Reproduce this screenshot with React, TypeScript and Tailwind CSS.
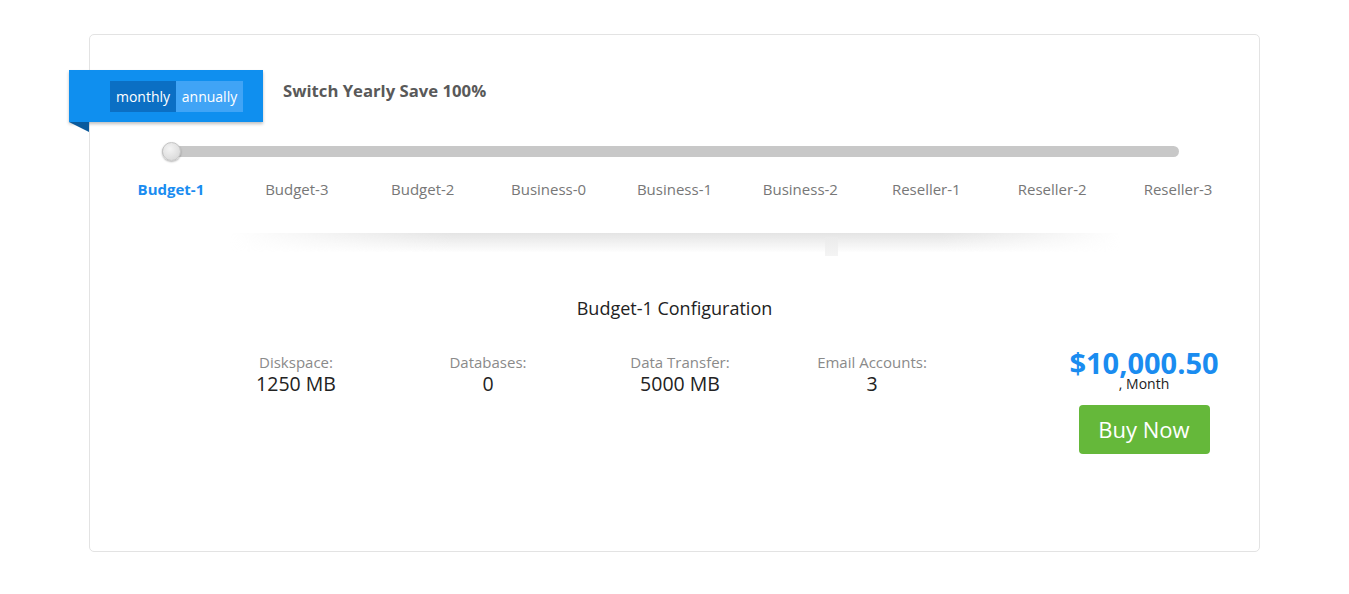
import React from 'react';

const plans = ['Budget-1', 'Budget-3', 'Budget-2', 'Business-0', 'Business-1', 'Business-2', 'Reseller-1', 'Reseller-2', 'Reseller-3'];

const stats = [
  { label: 'Diskspace:', value: '1250 MB' },
  { label: 'Databases:', value: '0' },
  { label: 'Data Transfer:', value: '5000 MB' },
  { label: 'Email Accounts:', value: '3' },
];

const App: React.FC = () => {
  return (
    <div className="min-h-screen bg-white pt-[34px] font-['Open_Sans',sans-serif]">
      <div className="mx-auto w-[1171px] h-[518px] border border-[#e3e3e3] rounded-[5px] bg-white">
        {/* Ribbon + switch text */}
        <div className="mt-[35px] flex items-start">
          <div className="relative -ml-[21px] w-[194px] h-[52px] bg-[#0f8fef] shadow-[0_2px_3px_rgba(0,0,0,0.25)] flex items-center">
            <div className="ml-[41px] flex h-[31px] text-[14px] leading-[20px] text-white">
              <div className="w-[66px] bg-[#0b6fc4] flex items-center justify-center pt-[1px]">monthly</div>
              <div className="w-[67px] bg-[#40a4f6] flex items-center justify-center pt-[1px]">annually</div>
            </div>
            <div className="absolute left-0 top-full w-[20px] h-[10px] bg-[#0a5a9c] [clip-path:polygon(0_0,100%_0,100%_100%)]" />
          </div>
          <div className="ml-[20px] mt-[9px] text-[16.7px] leading-[24px] font-bold text-[#595959]">Switch Yearly Save 100%</div>
        </div>

        {/* Slider */}
        <div className="mt-[24px] ml-[72px] mr-[80px] relative h-[11px] rounded-full bg-[#c8c8c8]">
          <div className="absolute left-0 -top-[4px] w-[19px] h-[19px] rounded-full border border-[#c4c4c4] bg-[radial-gradient(circle_at_40%_35%,#f4f4f4,#d3d3d3)] shadow-[0_1px_2px_rgba(0,0,0,0.3)]" />
        </div>

        <div className="mt-[21px] px-[18px] grid grid-cols-9">
          {plans.map((p, i) => (
            <div
              key={p}
              className={
                i === 0
                  ? 'text-center text-[15px] leading-[22px] font-bold text-[#1a8cf0]'
                  : 'text-center text-[15px] leading-[22px] text-[#777]'
              }
            >
              {p}
            </div>
          ))}
        </div>

        {/* Shadow divider */}
        <div className="mt-[33px] ml-[140px] w-[890px] h-[23px] relative">
          <div className="h-[20px] bg-[linear-gradient(to_bottom,#e4e4e4,rgba(255,255,255,0))] [mask-image:linear-gradient(to_right,transparent,black_25%,black_80%,transparent)]" />
          <div className="absolute left-[595px] top-[4px] w-[13px] h-[19px] bg-[linear-gradient(to_bottom,#ebebeb,#f4f4f4)]" />
        </div>

        {/* Configuration */}
        <div className="mt-[39px] text-center text-[18px] leading-[26px] text-[#222]">Budget-1 Configuration</div>

        <div className="mt-[26px] flex items-start">
          <div className="ml-[110px] mt-[5px] flex">
            {stats.map((s) => (
              <div key={s.label} className="w-[192px] text-center">
                <div className="text-[15px] leading-[20px] text-[#8a8a8a]">{s.label}</div>
                <div className="text-[19.5px] leading-[24px] text-[#222]">{s.value}</div>
              </div>
            ))}
          </div>
          <div className="ml-auto mr-[41px] w-[148px] flex flex-col items-center">
            <div className="mt-[3px] text-[29px] leading-[26px] font-bold text-[#1a8cf0]">$10,000.50</div>
            <div className="text-[14px] leading-[16px] text-[#222]">, Month</div>
            <button className="mt-[13px] w-[131px] h-[49px] rounded-[4px] bg-[#65b83a] text-white text-[22px]">Buy Now</button>
          </div>
        </div>
      </div>
    </div>
  );
};

export default App;
